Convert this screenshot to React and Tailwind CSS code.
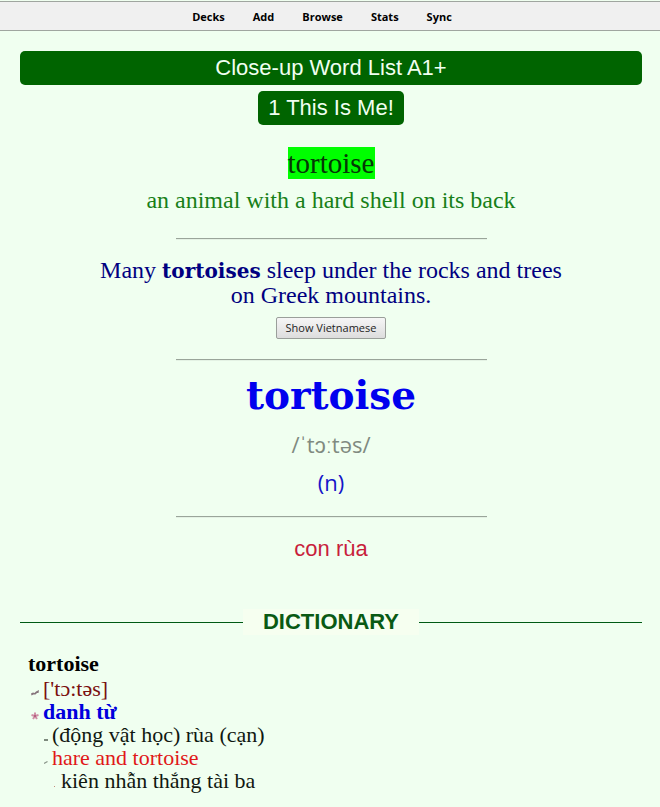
const navItems = ['Decks', 'Add', 'Browse', 'Stats', 'Sync'];

const serif = "font-['Liberation_Serif',serif]";
const wideSerif = "font-['DejaVu_Serif',serif]";
const sans = "font-['Liberation_Sans',sans-serif]";
const humanist = "font-['Open_Sans',sans-serif]";

function Divider() {
  return <hr className="mx-auto h-0.5 w-1/2 border-t border-b border-t-[#9aa59a] border-b-[#e4f2e4]" />;
}

function SpeakMark() {
  return (
    <svg aria-hidden="true" className="mt-2 h-2 w-2 shrink-0" viewBox="0 0 8 8">
      <path d="M0 4.5 L2 3.5 L3.5 4 L5 2.5 L8 1 L7.5 4 L6 4 L4.5 5.5 L2.5 5.5 L.5 6.5 Z" fill="#86757c" />
    </svg>
  );
}

function FlowerMark() {
  return (
    <svg aria-hidden="true" className="mt-2 h-2 w-2 shrink-0" viewBox="0 0 8 8">
      <path d="M4 .5V4M.5 3L4 4M7.5 3L4 4M2 7L4 4M6 7L4 4" stroke="#d08fa6" strokeWidth="2" fill="none" />
      <circle cx="4" cy="4" r="1" fill="#a85570" />
    </svg>
  );
}

function DashMark() {
  return (
    <svg aria-hidden="true" className="mt-2 h-2 w-1 shrink-0" viewBox="0 0 4 8">
      <path d="M0 4H4V6H0Z" fill="#7d8a7d" />
    </svg>
  );
}

function TickMark() {
  return (
    <svg aria-hidden="true" className="mt-2 h-2 w-1 shrink-0" viewBox="0 0 4 8">
      <path d="M0 5.5L3.5 3.5" stroke="#8a968a" strokeWidth="1.2" />
    </svg>
  );
}

function DotMark() {
  return (
    <svg aria-hidden="true" className="mt-2 h-2 w-1 shrink-0" viewBox="0 0 4 8">
      <path d="M1 5H2V6H1Z" fill="#c58d7d" />
    </svg>
  );
}

export default function App() {
  return (
    <div className="min-h-screen bg-[#f0fff0] pt-px">
      <nav className={`${humanist} border-y border-[#a0a6a0] bg-[#f0f0f0] text-[11px] font-bold text-black`}>
        <ul className="flex h-7 items-center justify-center gap-7 pt-1 pr-4 pb-0.5">
          {navItems.map((item) => (
            <li key={item}>
              <a href="#">{item}</a>
            </li>
          ))}
        </ul>
      </nav>

      <main className="pr-[18px] pl-5 pt-5 pb-3 text-center">
        <header className={`${sans} flex flex-col items-center gap-1.5 text-[22px] leading-[34px] text-[#f0fff0]`}>
          <h1 className="w-full rounded-[5px] bg-[#006400]">Close-up Word List A1+</h1>
          <h2 className="rounded-[5px] bg-[#006400] px-2.5">1 This Is Me!</h2>
        </header>

        <section className={`${serif} pt-[22px] text-2xl`}>
          <p className="text-[29px] leading-8">
            <mark className="inline-block bg-[#00ff00] text-[#053805]">tortoise</mark>
          </p>
          <p className="pt-[9px] pb-[25px] leading-[25px] text-[#188018]">an animal with a hard shell on its back</p>
          <Divider />
          <p className="mx-auto pt-[18px] leading-[25px] text-[#000080]">
            Many <b className={`${wideSerif} text-xl leading-none`}>tortoises</b> sleep under the rocks and trees
            <br />
            on Greek mountains.
          </p>
          <button
            type="button"
            className={`${humanist} mx-auto mt-[9px] mb-5 block h-[22px] w-[110px] rounded-xs border border-[#9a9f9a] bg-linear-to-b from-[#f6f6f6] to-[#dddddd] text-[11px] leading-5 whitespace-nowrap text-[#222222]`}
          >
            Show Vietnamese
          </button>
          <Divider />
        </section>

        <section>
          <p className={`${wideSerif} pt-1.5 pb-0.5 text-[39px] leading-[56px] font-bold text-[#0000ee]`}>tortoise</p>
          <p className={`${humanist} text-[22px] leading-[38px] text-[#808a80]`}>/ˈtɔːtəs/</p>
          <p className={`${humanist} pb-[15px] text-[22px] leading-[38px] text-[#1414c8]`}>(n)</p>
          <Divider />
          <p className={`${sans} pt-[18px] text-[22px] leading-[26px] text-[#c81e3c]`}>con rùa</p>
        </section>

        <section className="pt-[47px]">
          <h2 className={`${sans} flex items-center text-[22px] leading-[26px] font-bold text-[#0a5a14]`}>
            <span className="h-px flex-1 bg-[#005a14]" />
            <span className="bg-[#f6fff0] px-5">DICTIONARY</span>
            <span className="h-px flex-1 bg-[#005a14]" />
          </h2>

          <div className={`${serif} pt-4 pl-2 text-left text-[22px] leading-[23px]`}>
            <p className="leading-[26px] font-bold text-black">tortoise</p>
            <ul className="text-[#101810]">
              <li className="flex items-center gap-1 pl-[3px] text-[#7a1010]">
                <SpeakMark />
                <span>[&#39;tɔ:təs]</span>
              </li>
              <li className="flex items-center gap-1 pl-[3px] font-bold text-[#0000dd]">
                <FlowerMark />
                <span>danh từ</span>
              </li>
              <li className="flex items-center gap-1 pl-4">
                <DashMark />
                <span>(động vật học) rùa (cạn)</span>
              </li>
              <li className="flex items-center gap-1 pl-4 text-[#e01818]">
                <TickMark />
                <span>hare and tortoise</span>
              </li>
              <li className="flex items-center gap-1 pl-[25px]">
                <DotMark />
                <span>kiên nhẫn thắng tài ba</span>
              </li>
            </ul>
          </div>
        </section>
      </main>
    </div>
  );
}
